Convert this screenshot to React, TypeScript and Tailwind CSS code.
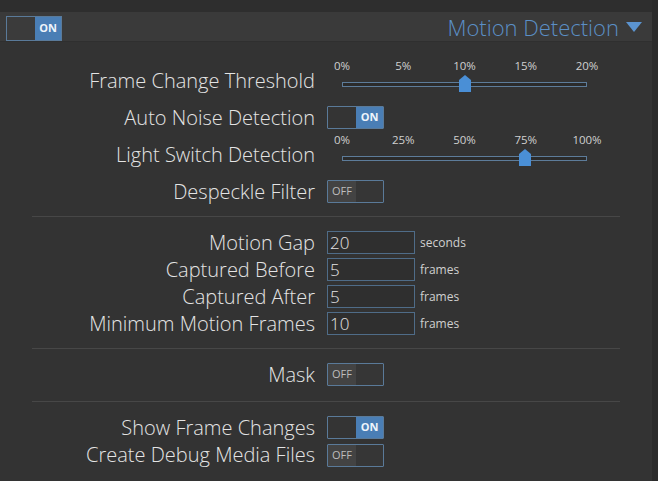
import React from "react";

const font = { fontFamily: '"Open Sans", "Liberation Sans", sans-serif' };

function Toggle({ on }: { on: boolean }) {
  return (
    <div className="flex h-[23px] w-[57px] border border-[#5a7a99] rounded-[1px] overflow-hidden">
      {on ? (
        <>
          <div className="w-[28px] bg-[#343434]" />
          <div className="flex-1 bg-[#4a7eb5] flex items-center justify-center text-[11px] font-bold text-[#eef4fb]">ON</div>
        </>
      ) : (
        <>
          <div className="w-[28px] bg-[#434343] flex items-center justify-center text-[11px] text-[#bdbdbd]">OFF</div>
          <div className="flex-1 bg-[#363636]" />
        </>
      )}
    </div>
  );
}

function Slider({ labels, value }: { labels: string[]; value: number }) {
  return (
    <div className="flex flex-col w-[273px] h-full">
      <div className="relative h-[14px] mt-[-3px] ml-[15px] w-[245px]">
        {labels.map((l, i) => (
          <span
            key={l}
            className="absolute top-0 -translate-x-1/2 text-[11.5px] leading-[14px] text-[#d0d0d0] whitespace-nowrap"
            style={{ left: `${(i / (labels.length - 1)) * 100}%` }}
          >
            {l}
          </span>
        ))}
      </div>
      <div className="relative ml-[15px] mt-[9px] w-[245px] h-[5px] border border-[#5d7c9a] bg-[#2b2b2b]">
        <svg
          width="12"
          height="17"
          viewBox="0 0 12 17"
          className="absolute top-[-8px] -translate-x-1/2"
          style={{ left: `${value}%` }}
        >
          <path d="M6 0 L12 5 L12 17 L0 17 L0 5 Z" fill="#4a8fd6" />
        </svg>
      </div>
    </div>
  );
}

function Row({ label, h, children }: { label: string; h: string; children?: React.ReactNode }) {
  return (
    <div className={`flex items-center ${h}`}>
      <div className="w-[315px] text-right text-[20px] font-light text-[#e4e4e4] whitespace-nowrap leading-none">{label}</div>
      <div className="ml-[12px] flex items-center h-full">{children}</div>
    </div>
  );
}

function NumInput({ v, unit }: { v: string; unit: string }) {
  return (
    <>
      <div className="w-[88px] h-[23px] border border-[#4f6c88] bg-[#2f2f2f] text-[17px] font-light leading-[21px] pl-[2px] text-[#e4e4e4]">{v}</div>
      <span className="ml-[5px] text-[12px] text-[#d0d0d0]">{unit}</span>
    </>
  );
}

function Sep({ cls }: { cls: string }) {
  return <div className={`mx-[32px] border-t border-[#474747] ${cls}`} />;
}

export default function App() {
  return (
    <div className="w-[658px] h-[481px] bg-[#2b2b2b] flex overflow-hidden" style={font}>
      <div className="w-[652px] h-full flex flex-col bg-[#333333]">
        <div className="h-[12px] bg-[#2e2e2e]" />
        <div className="h-[30px] bg-[#3a3a3a] border-b border-[#2f2f2f] flex items-center justify-between pl-[6px] pr-[10px]">
          <div className="flex h-[25px] w-[56px] border border-[#5a7a99] overflow-hidden mt-[3px]">
            <div className="w-[28px] bg-[#3b3b3b]" />
            <div className="flex-1 bg-[#4a7eb5] flex items-center justify-center text-[11px] font-bold text-[#eef4fb]">ON</div>
          </div>
          <div className="flex items-center mt-[2px]">
            <span className="text-[22px] font-light text-[#5b8fc6]">Motion Detection</span>
            <svg width="16" height="11" viewBox="0 0 16 11" className="ml-[7px]">
              <path d="M0 0 L16 0 L8 10 Z" fill="#5b93cf" />
            </svg>
          </div>
        </div>
        <div className="flex flex-col pt-[20px]">
          <Row label="Frame Change Threshold" h="h-[37px]">
            <Slider labels={["0%", "5%", "10%", "15%", "20%"]} value={50} />
          </Row>
          <Row label="Auto Noise Detection" h="h-[37px]">
            <Toggle on />
          </Row>
          <Row label="Light Switch Detection" h="h-[37px]">
            <Slider labels={["0%", "25%", "50%", "75%", "100%"]} value={75} />
          </Row>
          <Row label="Despeckle Filter" h="h-[37px]">
            <Toggle on={false} />
          </Row>
          <Sep cls="mt-[6px] mb-[12px]" />
          <Row label="Motion Gap" h="h-[27px]">
            <NumInput v="20" unit="seconds" />
          </Row>
          <Row label="Captured Before" h="h-[27px]">
            <NumInput v="5" unit="frames" />
          </Row>
          <Row label="Captured After" h="h-[27px]">
            <NumInput v="5" unit="frames" />
          </Row>
          <Row label="Minimum Motion Frames" h="h-[27px]">
            <NumInput v="10" unit="frames" />
          </Row>
          <Sep cls="mt-[11px] mb-[12px]" />
          <Row label="Mask" h="h-[27px]">
            <Toggle on={false} />
          </Row>
          <Sep cls="mt-[13px] mb-[12px]" />
          <Row label="Show Frame Changes" h="h-[27px]">
            <Toggle on />
          </Row>
          <Row label="Create Debug Media Files" h="h-[28px]">
            <Toggle on={false} />
          </Row>
        </div>
      </div>
    </div>
  );
}
